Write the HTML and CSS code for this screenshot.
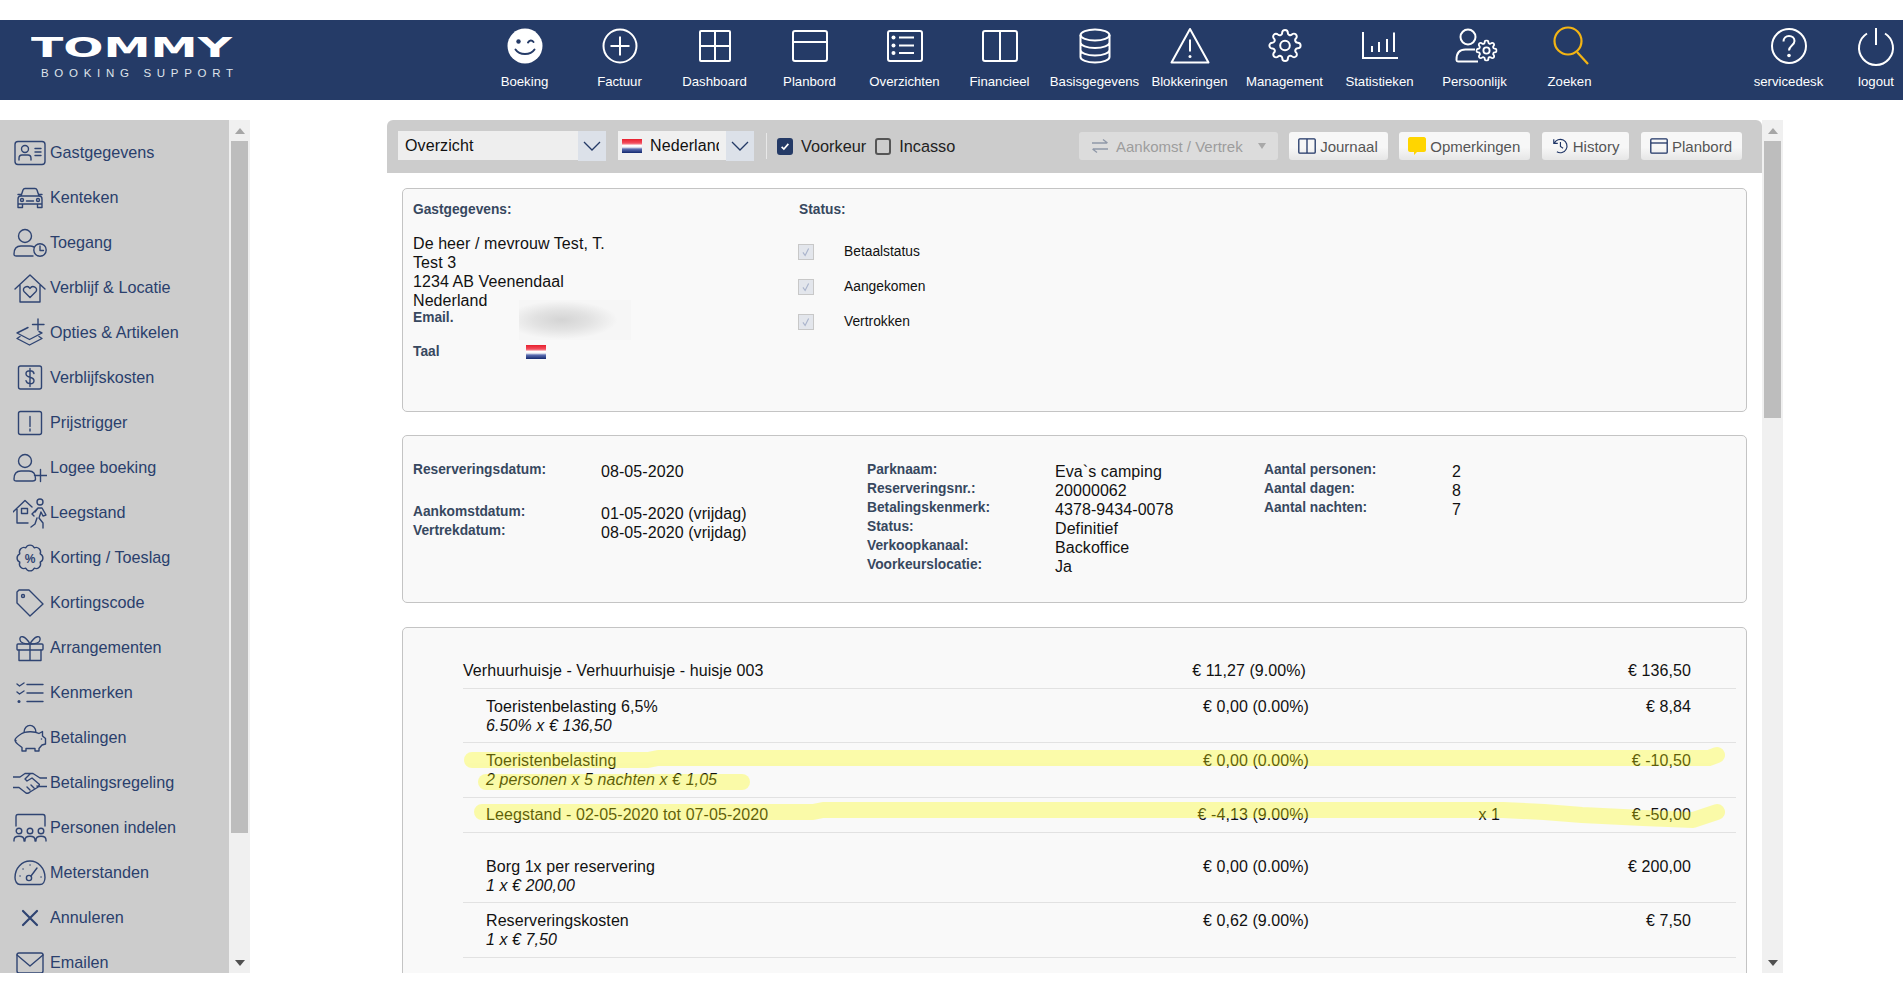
FILE: index.html
```html
<!DOCTYPE html>
<html lang="nl">
<head>
<meta charset="utf-8">
<title>Tommy Booking Support</title>
<link rel="stylesheet" href="styles.css">
</head>
<body>
<svg class="defs" width="0" height="0" aria-hidden="true">
  <symbol id="gear" viewBox="0 0 24 24"><circle cx="12" cy="12" r="3.4"/><path d="M19.4 15a1.65 1.65 0 0 0 .33 1.82l.06.06a2 2 0 0 1 0 2.83 2 2 0 0 1-2.83 0l-.06-.06a1.65 1.65 0 0 0-1.82-.33 1.65 1.65 0 0 0-1 1.51V21a2 2 0 0 1-2 2 2 2 0 0 1-2-2v-.09A1.65 1.65 0 0 0 9 19.4a1.65 1.65 0 0 0-1.82.33l-.06.06a2 2 0 0 1-2.83 0 2 2 0 0 1 0-2.83l.06-.06a1.65 1.65 0 0 0 .33-1.82 1.65 1.65 0 0 0-1.51-1H3a2 2 0 0 1-2-2 2 2 0 0 1 2-2h.09A1.65 1.65 0 0 0 4.6 9a1.65 1.65 0 0 0-.33-1.82l-.06-.06a2 2 0 0 1 0-2.83 2 2 0 0 1 2.83 0l.06.06a1.65 1.65 0 0 0 1.82.33H9a1.65 1.65 0 0 0 1-1.51V3a2 2 0 0 1 2-2 2 2 0 0 1 2 2v.09a1.65 1.65 0 0 0 1 1.51 1.65 1.65 0 0 0 1.82-.33l.06-.06a2 2 0 0 1 2.83 0 2 2 0 0 1 0 2.83l-.06.06a1.65 1.65 0 0 0-.33 1.82V9a1.65 1.65 0 0 0 1.51 1H21a2 2 0 0 1 2 2 2 2 0 0 1-2 2h-.09a1.65 1.65 0 0 0-1.51 1z"/></symbol>
</svg>

<header class="topbar">
  <div class="logo">
    <div class="logo-main">TOMMY</div>
    <div class="logo-sub">BOOKING SUPPORT</div>
  </div>
  <nav class="nav">
    <a class="nav-item"><svg class="nav-ico" viewBox="0 0 40 38"><circle class="solid" cx="20" cy="19" r="17.5"/><circle class="face" cx="13.5" cy="14.5" r="2.2"/><path class="face-line" d="M23 15.5c1.5-2.5 4-2.5 5.5-.5M10.500 22.500c4 6 15 6 19 0"/></svg><span>Boeking</span></a>
    <a class="nav-item"><svg class="nav-ico" viewBox="0 0 40 38"><circle cx="20" cy="19" r="16.5"/><path d="M20 9.500v19M10.500 19h19"/></svg><span>Factuur</span></a>
    <a class="nav-item"><svg class="nav-ico" viewBox="0 0 40 38"><rect x="5" y="4" width="30" height="30" rx="1"/><path d="M20 4v30M5 19h30"/></svg><span>Dashboard</span></a>
    <a class="nav-item"><svg class="nav-ico" viewBox="0 0 40 38"><rect x="3" y="4" width="34" height="30" rx="2"/><path d="M3 15h34"/></svg><span>Planbord</span></a>
    <a class="nav-item"><svg class="nav-ico" viewBox="0 0 40 38"><rect x="3" y="4" width="34" height="30" rx="2"/><path d="M14 10.500h15M14 18.500h15M14 26h15"/><circle class="dot" cx="8.500" cy="10.500" r="2"/><circle class="dot" cx="8.500" cy="18.500" r="2"/><circle class="dot" cx="8.500" cy="26" r="2"/></svg><span>Overzichten</span></a>
    <a class="nav-item"><svg class="nav-ico" viewBox="0 0 40 38"><rect x="3" y="4" width="34" height="30" rx="2"/><path d="M20 4v30"/></svg><span>Financieel</span></a>
    <a class="nav-item"><svg class="nav-ico" viewBox="0 0 40 38"><ellipse cx="20" cy="8" rx="14.500" ry="5.500"/><path d="M5.500 8v22c0 3 6.500 5.500 14.500 5.500s14.500-2.500 14.500-5.500V8M5.500 15.500c0 3 6.500 5.500 14.500 5.500s14.500-2.500 14.500-5.500M5.500 23c0 3 6.500 5.500 14.500 5.500s14.500-2.500 14.500-5.500"/></svg><span>Basisgegevens</span></a>
    <a class="nav-item"><svg class="nav-ico" viewBox="0 0 40 38"><path class="round" d="M20 2L38.500 35.500H1.500Z"/><path d="M20 12.500v12"/><circle class="dot" cx="20" cy="29.500" r="1.500"/></svg><span>Blokkeringen</span></a>
    <a class="nav-item"><svg class="nav-ico" viewBox="0 0 40 38"><use class="gear-big" href="#gear" x="3" y="1.500" width="34" height="34"/></svg><span>Management</span></a>
    <a class="nav-item"><svg class="nav-ico" viewBox="0 0 40 38"><path d="M3 5v26h35M12 19v6M19 15v10M27 12v13M34 5.500v19.500"/></svg><span>Statistieken</span></a>
    <a class="nav-item"><svg class="nav-ico" viewBox="0 0 40 38"><circle cx="13" cy="10" r="7.500"/><path class="round" d="M23 34.500H3.500c-2 0-2-.5-2-2 0-6 3-10 9-10H20"/><use href="#gear" x="20.500" y="12.500" width="22" height="22"/></svg><span>Persoonlijk</span></a>
    <a class="nav-item nav-search"><svg class="nav-ico" viewBox="0 0 40 38"><circle cx="18" cy="14" r="13.500"/><path d="M27 25l11 12"/></svg><span>Zoeken</span></a>
  </nav>
  <div class="nav-right">
    <a class="nav-item nav-service"><svg class="nav-ico" viewBox="0 0 40 38"><circle cx="20" cy="19" r="17"/><path d="M14.500 14.500c0-3.500 2.500-5.500 5.500-5.500s5.500 2 5.500 5c0 4.500-5.500 4.500-5.500 9.500"/><circle class="dot" cx="20" cy="28.500" r="1.800"/></svg><span>servicedesk</span></a>
    <a class="nav-item nav-logout"><svg class="nav-ico" viewBox="0 0 40 38"><path d="M11 6.500a17 17 0 1 0 18 0M20 1v17"/></svg><span>logout</span></a>
  </div>
</header>

<main class="layout">
  <aside class="side">
    <ul class="side-list">
      <li class="side-item"><svg class="side-ico" viewBox="0 0 34 32"><rect x="2" y="4.500" width="30" height="23" rx="3"/><circle cx="12" cy="12" r="3.500"/><path d="M6 23v-1.500c0-2.500 1.500-3.500 3-3.500h6c1.500 0 3 1 3 3.500V23M22 11.500h6M22 15h6M22 18.500h6"/></svg><span>Gastgegevens</span></li>
      <li class="side-item"><svg class="side-ico" viewBox="0 0 34 32"><path d="M8 14l2-6c.4-1 1-1.500 2-1.500h10c1 0 1.600.5 2 1.500l2 6M8 14h18c1.500 0 3 1 3 3v5H5v-5c0-2 1.500-3 3-3zM5 22v3.500h4.500V22M24.500 22v3.500H29V22M5 12.500h3M26 12.500h3M13.500 19h7"/><circle cx="9" cy="18" r="1.500"/><circle cx="25" cy="18" r="1.500"/></svg><span>Kenteken</span></li>
      <li class="side-item"><svg class="side-ico" viewBox="0 0 34 32"><circle cx="12" cy="9" r="6.500"/><path d="M20 29H3.500c-2 0-2.500-.5-2.500-2 0-5 2.500-8 7-8h9c2 0 3 .5 4 1"/><circle cx="27" cy="23" r="6.200"/><path d="M27 19v4.500h3.500"/></svg><span>Toegang</span></li>
      <li class="side-item"><svg class="side-ico" viewBox="0 0 34 32"><path d="M2 17L17 3l15 14M7 13.500V30h20V13.500"/><path d="M17 25.500l-6-6c-2.500-3.500 3.500-7 6-3 2.500-4 8.500-.5 6 3z"/></svg><span>Verblijf &amp; Locatie</span></li>
      <li class="side-item"><svg class="side-ico" viewBox="0 0 34 32"><path d="M25 2v11M19.500 7.500H31M15 10.500L4 16l12.500 6.500L29 16l-3-1.500M7 19.500L4 21.500l12.500 6.500 12.500-6.500-3-2"/></svg><span>Opties &amp; Artikelen</span></li>
      <li class="side-item"><svg class="side-ico" viewBox="0 0 34 32"><rect x="5.500" y="4" width="23" height="23" rx="2"/><path d="M21 11.500c-.5-2-2-2.800-4-2.800s-4 1-4 3 2 3 4 3.500 4 1.500 4 3.500-2 3-4 3-3.500-1-4-3M17 6.500v18"/></svg><span>Verblijfskosten</span></li>
      <li class="side-item"><svg class="side-ico" viewBox="0 0 34 32"><rect x="5.500" y="4.500" width="23" height="23" rx="2"/><path d="M17 9.500v10M17 22v2"/></svg><span>Prijstrigger</span></li>
      <li class="side-item"><svg class="side-ico" viewBox="0 0 34 32"><circle cx="12" cy="9" r="6.500"/><path d="M19.500 29H3.500c-2 0-2.500-.5-2.500-2 0-5 2.500-8 7-8h8c5 0 6.500 3 6.500 8 0 1.500-1 2-3 2zM27.500 17.500v12M21.500 23.500H34"/></svg><span>Logee boeking</span></li>
      <li class="side-item"><svg class="side-ico" viewBox="0 0 34 32"><path d="M0 15L12 3.500 19 10M4 12v14h11"/><rect x="8.500" y="11.500" width="6" height="5"/><circle cx="27" cy="5" r="3"/><path d="M22 15l3-4h4l4 7-3 1-2-4-2 6 4 5v5M24 21l-2 6-4 3M25 11l-6 6 2 2"/></svg><span>Leegstand</span></li>
      <li class="side-item"><svg class="side-ico" viewBox="0 0 34 32"><path d="M27.200 11.800A4.600 4.600 0 0 1 27.200 20.200A4.600 4.600 0 0 1 21.200 26.200A4.600 4.600 0 0 1 12.800 26.200A4.600 4.600 0 0 1 6.800 20.200A4.600 4.600 0 0 1 6.800 11.800A4.600 4.600 0 0 1 12.800 5.800A4.600 4.600 0 0 1 21.200 5.800A4.600 4.600 0 0 1 27.200 11.800Z"/><text class="ico-text" x="17" y="20.500">%</text></svg><span>Korting / Toeslag</span></li>
      <li class="side-item"><svg class="side-ico" viewBox="0 0 34 32"><path d="M6 3h10l14 14-13 12L4 16V5z"/><circle cx="10" cy="9" r="1.500"/></svg><span>Kortingscode</span></li>
      <li class="side-item"><svg class="side-ico" viewBox="0 0 34 32"><rect x="4" y="12" width="26" height="6" rx="1"/><path d="M6 18v10.500h22V18M17 12v16.500M17 12C12 3 6 3 7 8c.5 3 5 4 10 4zM17 12c5-9 11-9 10-4-.5 3-5 4-10 4z"/></svg><span>Arrangementen</span></li>
      <li class="side-item"><svg class="side-ico" viewBox="0 0 34 32"><path d="M4 7l2.500 2L11 6M4 15l2.500 2L11 14M14 7.500h16M14 16h16M14 24.500h16"/><circle class="fill" cx="6" cy="24.500" r="1.500"/></svg><span>Kenmerken</span></li>
      <li class="side-item"><svg class="side-ico" viewBox="0 0 34 32"><path d="M8 12c4-3 14-3 18-.5l3.500-2V14l3 2.500v5.500l-3.500 1-3 3.500V29h-4v-2.500h-9V29H9v-3.500C6 23 2 21 2 18c0-2 3-4 6-6zM11 10.500C11 1 23 1 23 10.500M2 18.500h1"/><circle class="fill" cx="28.500" cy="17" r=".8"/></svg><span>Betalingen</span></li>
      <li class="side-item"><svg class="side-ico" viewBox="0 0 34 32"><path d="M0 10h7l5-3.500h8L27 11h7M0 20.500h6l7 5.500c2 1 3 0 4-1l9-5.500h8M17 7l-5 5 2 2 5-3 7 6c1 1-1 3-2 2M18 18l3 3M14 20l3 3"/></svg><span>Betalingsregeling</span></li>
      <li class="side-item"><svg class="side-ico" viewBox="0 0 34 32"><path d="M3 14V5c0-1.500.5-2.500 2-2.500h25c1.500 0 2 1 2 2.500v9"/><circle cx="6" cy="19" r="2.800"/><circle cx="17" cy="19" r="2.800"/><circle cx="28" cy="19" r="2.800"/><path d="M1 29v-1c0-5 10-5 10 0v1M12 29v-1c0-5 10-5 10 0v1M23 29v-1c0-5 10-5 10 0v1"/></svg><span>Personen indelen</span></li>
      <li class="side-item"><svg class="side-ico" viewBox="0 0 34 32"><path d="M7 27.500c-3 0-5-3-5-7C2 11 9 4 17 4s15 7 15 16.500c0 4-2 7-5 7z"/><circle cx="16" cy="21" r="2.600"/><path d="M18 19l6-8M7 19h.1M10 12h.1M17 8h.1M28 20h.1"/></svg><span>Meterstanden</span></li>
      <li class="side-item"><svg class="side-ico side-ico-x" viewBox="0 0 34 32"><path d="M10 9l14 14M24 9L10 23"/></svg><span>Annuleren</span></li>
      <li class="side-item"><svg class="side-ico" viewBox="0 0 34 32"><rect x="4" y="6" width="26" height="20" rx="2"/><path d="M4 8l13 11L30 8"/></svg><span>Emailen</span></li>
    </ul>
    <div class="scrollbar">
      <div class="sb-up"></div>
      <div class="sb-thumb sb-thumb-side"></div>
      <div class="sb-down"></div>
    </div>
  </aside>

  <section class="content">
    <div class="pane">
      <div class="toolbar">
        <div class="select select-view"><span class="select-text">Overzicht</span><span class="select-arrow"><svg viewBox="0 0 20 12"><path d="M2 2l8 8 8-8"/></svg></span></div>
        <div class="select select-lang"><span class="flag"></span><span class="select-text select-clip">Nederland</span><span class="select-arrow"><svg viewBox="0 0 20 12"><path d="M2 2l8 8 8-8"/></svg></span></div>
        <span class="tool-sep"></span>
        <label class="tool-check"><span class="cb cb-on"><svg viewBox="0 0 16 16"><path d="M3.500 8.500l3 3 6-7"/></svg></span>Voorkeur</label>
        <label class="tool-check"><span class="cb"></span>Incasso</label>
        <div class="tool-btns">
          <a class="btn btn-off"><svg class="btn-ico" viewBox="0 0 18 16"><path d="M1 5h15M12 1.500L16.500 5M17 11H2M6 14.500L1.500 11"/></svg>Aankomst / Vertrek<span class="caret"></span></a>
          <a class="btn"><svg class="btn-ico" viewBox="0 0 18 16"><rect x=".8" y=".8" width="16.400" height="14.400" rx="1"/><path d="M9 1v14"/></svg>Journaal</a>
          <a class="btn"><svg class="btn-ico btn-note" viewBox="0 0 18 18"><path d="M2 0h14c1 0 2 1 2 2v11c0 1-1 2-2 2H9l-3 3v-3H2c-1 0-2-1-2-2V2C0 1 1 0 2 0z"/></svg>Opmerkingen</a>
          <a class="btn"><svg class="btn-ico" viewBox="0 0 18 18"><path d="M2 1.500V6h4.500M2.500 6A7.500 7.500 0 1 1 5.500 15.500M9.500 4.500V9.500l3 2"/></svg>History</a>
          <a class="btn"><svg class="btn-ico" viewBox="0 0 18 16"><rect x=".8" y=".8" width="16.400" height="14.400" rx="1"/><path d="M1 5h16"/></svg>Planbord</a>
        </div>
      </div>

      <div class="panel panel-guest">
        <div class="guest-col">
          <div class="lbl">Gastgegevens:</div>
          <div class="address">De heer / mevrouw Test, T.<br>Test 3<br>1234 AB Veenendaal<br>Nederland</div>
          <div class="guest-row"><div class="lbl lbl-key">Email.</div><div class="blur"></div></div>
          <div class="guest-row guest-lang"><div class="lbl lbl-key">Taal</div><span class="flag"></span></div>
        </div>
        <div class="status-col">
          <div class="lbl">Status:</div>
          <div class="status-list">
            <div class="status-row"><span class="cb-dim"><svg viewBox="0 0 16 16"><path d="M4.500 8.500l2.500 3.500 4-8"/></svg></span>Betaalstatus</div>
            <div class="status-row"><span class="cb-dim"><svg viewBox="0 0 16 16"><path d="M4.500 8.500l2.500 3.500 4-8"/></svg></span>Aangekomen</div>
            <div class="status-row"><span class="cb-dim"><svg viewBox="0 0 16 16"><path d="M4.500 8.500l2.500 3.500 4-8"/></svg></span>Vertrokken</div>
          </div>
        </div>
      </div>

      <div class="panel panel-res">
        <div class="res-group res-dates">
          <div class="lbl">Reserveringsdatum:</div><div class="val">08-05-2020</div>
          <div class="res-gap"></div>
          <div class="lbl">Aankomstdatum:</div><div class="val">01-05-2020 (vrijdag)</div>
          <div class="lbl">Vertrekdatum:</div><div class="val">08-05-2020 (vrijdag)</div>
        </div>
        <div class="res-group res-park">
          <div class="lbl">Parknaam:</div><div class="val">Eva`s camping</div>
          <div class="lbl">Reserveringsnr.:</div><div class="val">20000062</div>
          <div class="lbl">Betalingskenmerk:</div><div class="val">4378-9434-0078</div>
          <div class="lbl">Status:</div><div class="val">Definitief</div>
          <div class="lbl">Verkoopkanaal:</div><div class="val">Backoffice</div>
          <div class="lbl">Voorkeurslocatie:</div><div class="val">Ja</div>
        </div>
        <div class="res-group res-count">
          <div class="lbl">Aantal personen:</div><div class="val">2</div>
          <div class="lbl">Aantal dagen:</div><div class="val">8</div>
          <div class="lbl">Aantal nachten:</div><div class="val">7</div>
        </div>
      </div>

      <div class="panel panel-lines">
        <div class="line line-head"><div class="line-name">Verhuurhuisje - Verhuurhuisje - huisje 003</div><div class="line-vat line-vat-head">€ 11,27 (9.00%)</div><div class="line-qty"></div><div class="line-total">€ 136,50</div></div>
        <div class="line line-a"><div class="line-name">Toeristenbelasting 6,5%<br><em>6.50% x € 136,50</em></div><div class="line-vat">€ 0,00 (0.00%)</div><div class="line-qty"></div><div class="line-total">€ 8,84</div></div>
        <div class="line line-b"><div class="line-name">Toeristenbelasting<br><em>2 personen x 5 nachten x € 1,05</em></div><div class="line-vat">€ 0,00 (0.00%)</div><div class="line-qty"></div><div class="line-total">€ -10,50</div></div>
        <div class="line line-c"><div class="line-name">Leegstand - 02-05-2020 tot 07-05-2020</div><div class="line-vat">€ -4,13 (9.00%)</div><div class="line-qty">x 1</div><div class="line-total">€ -50,00</div></div>
        <div class="line line-d"><div class="line-name">Borg 1x per reservering<br><em>1 x € 200,00</em></div><div class="line-vat">€ 0,00 (0.00%)</div><div class="line-qty"></div><div class="line-total">€ 200,00</div></div>
        <div class="line line-e"><div class="line-name">Reserveringskosten<br><em>1 x € 7,50</em></div><div class="line-vat">€ 0,62 (9.00%)</div><div class="line-qty"></div><div class="line-total">€ 7,50</div></div>
        <svg class="marker" viewBox="0 0 1343 300" aria-hidden="true">
          <g>
            <path d="M69 132H245L255 130H1306L1314 127"/>
            <path d="M83 154H339"/>
            <path d="M79 184H410L420 182H1100L1141 184L1179 187L1240 190L1290 192L1314 184"/>
          </g>
        </svg>
      </div>
    </div>
    <div class="scrollbar">
      <div class="sb-up"></div>
      <div class="sb-thumb sb-thumb-main"></div>
      <div class="sb-down"></div>
    </div>
  </section>
</main>
</body>
</html>
```

FILE: styles.css
```css
* { box-sizing: border-box; }
html, body { margin: 0; padding: 0; height: 100%; overflow: hidden; background: #fff; }
body { padding-top: 20px; font-family: "Liberation Sans", Arial, sans-serif; font-size: 16px; color: #111; }
.defs { position: absolute; }

/* top bar */
.topbar { display: flex; height: 80px; background: #253b67; color: #fff; }
.logo { width: 477px; padding: 15px 0 0 31px; flex: none; }
.logo-main { font-family: "DejaVu Sans", sans-serif; font-weight: 700; font-size: 26px; line-height: 26px; width: 110px; white-space: nowrap; transform: scaleX(1.82); transform-origin: left center; }
.logo-sub { margin: 6px 0 0 10px; font-size: 11.500px; line-height: 12px; letter-spacing: 5.700px; white-space: nowrap; color: #dfe3ea; }
.nav { display: flex; }
.nav-item { display: flex; flex-direction: column; align-items: center; width: 95px; padding-top: 7px; }
.nav-item span { margin-top: 8px; font-size: 13.200px; line-height: 18px; white-space: nowrap; }
.nav-ico { display: block; width: 40px; height: 38px; fill: none; stroke: #fff; stroke-width: 2; overflow: visible; }
.nav-ico .solid { fill: #fff; stroke: none; }
.nav-ico .face { fill: #253b67; stroke: none; }
.nav-ico .face-line { stroke: #253b67; stroke-linecap: round; }
.nav-ico .dot { fill: #fff; stroke: none; }
.nav-ico .round { stroke-linejoin: round; }
.nav-ico .gear-big { stroke-width: 1.400; }
.nav-search .nav-ico { stroke: #f3b414; stroke-width: 2.200; }
.nav-right { display: flex; margin-left: auto; }
.nav-service { width: 87px; margin-right: 17px; }
.nav-logout { width: 54px; }

/* main layout */
.layout { display: flex; height: 853px; margin-top: 20px; }
.side { display: flex; flex: none; width: 250px; height: 100%; overflow: hidden; }
.side-list { flex: none; width: 229px; height: 100%; margin: 0; padding: 10px 0 0; list-style: none; background: #ccc; overflow: hidden; }
.side-item { display: flex; align-items: center; gap: 3px; height: 45px; padding-left: 13px; color: #2a3f6c; font-size: 16.200px; white-space: nowrap; }
.side-ico { flex: none; width: 34px; height: 32px; fill: none; stroke: #2f4472; stroke-width: 1.400; stroke-linejoin: round; stroke-linecap: round; }
.side-ico-x { stroke-width: 2.200; }
.side-ico .fill { fill: #2f4472; stroke: none; }
.ico-text { font-family: "Liberation Sans", sans-serif; font-size: 12px; font-weight: 700; text-anchor: middle; fill: #2f4472; stroke: none; }

.scrollbar { position: relative; display: flex; flex-direction: column; flex: none; width: 21px; height: 100%; background: #f0f0f0; }
.sb-up, .sb-down { flex: none; display: flex; align-items: center; justify-content: center; height: 21px; }
.sb-up::before { content: ""; border: 5px solid transparent; border-top-width: 0; border-bottom: 6px solid #a6a6a6; }
.sb-down { margin-top: auto; }
.sb-down::before { content: ""; border: 5px solid transparent; border-bottom-width: 0; border-top: 6px solid #505050; }
.sb-thumb { flex: none; margin: 0 2px 0 2px; background: #bdbdbd; }
.sb-thumb-side { height: 692px; }
.sb-thumb-main { height: 277px; }

.content { display: flex; flex: none; width: 1396px; height: 100%; margin-left: 137px; overflow: hidden; }
.pane { flex: none; width: 1375px; height: 100%; overflow: hidden; }

/* toolbar */
.toolbar { display: flex; align-items: center; height: 53px; padding: 0 20px 0 11px; background: #ccc; border-radius: 6px 6px 0 0; }
.select { display: flex; align-items: stretch; height: 29px; margin-bottom: 2px; background: #eee; letter-spacing: .1px; }
.select-view { width: 208px; padding-left: 7px; }
.select-lang { width: 136px; margin-left: 12px; padding-left: 4px; background: #f0f0f0; }
.select-text { flex: 1; line-height: 30px; color: #111; overflow: hidden; white-space: nowrap; }
.select-clip { margin: 0 7px 0 8px; }
.select-arrow { flex: none; display: flex; align-items: center; justify-content: center; width: 28px; height: 30px; background: #dce1e9; }
.select-arrow svg { width: 20px; height: 12px; fill: none; stroke: #243a66; stroke-width: 1.300; }
.flag { display: block; flex: none; align-self: center; width: 20px; height: 14px; background: linear-gradient(#e8202e 0, #f25060 30%, #ffffff 46%, #f4f4f8 58%, #5a6cb0 72%, #14296e 100%); }
.tool-sep { width: 1px; height: 26px; margin: 0 0 1px 12px; background: #e8e8e8; }
.tool-check { display: flex; align-items: center; gap: 8px; color: #222; font-size: 16.300px; margin: 0 0 1px 10px; white-space: nowrap; }
.tool-check + .tool-check { margin-left: 9px; }
.cb { display: block; width: 16px; height: 17px; border: 2px solid #555; border-radius: 3px; }
.cb-on { background: #243a66; border-color: #243a66; }
.cb svg { display: block; width: 12px; height: 13px; fill: none; stroke: #fff; stroke-width: 2.200; }
.tool-btns { display: flex; gap: 11.500px; margin: 0 0 1px auto; }
.btn { display: flex; align-items: center; gap: 4px; height: 28px; padding: 0 10px 0 9px; border-radius: 3px; background: linear-gradient(#f7f7f7 55%, #e6e6e6); color: #555; font-size: 15px; white-space: nowrap; }
.btn-off { gap: 7px; padding: 0 12px; background: #dcdcdc; color: #9d9d9d; }
.btn-ico { flex: none; width: 18px; height: 16px; fill: none; stroke: #1f3566; stroke-width: 1.300; }
.btn-off .btn-ico { stroke: #8f98a8; }
.btn-note { height: 18px; fill: #ffd500; stroke: none; }
.caret { margin-left: 8px; border: 4.500px solid transparent; border-bottom-width: 0; border-top: 6px solid #a8a8a8; }

/* panels */
.panel { margin: 0 15px; background: #f9f9f9; border: 1px solid #c4c4c4; border-radius: 5px; }
.lbl { font-size: 13.750px; line-height: 15px; font-weight: 700; color: #37485f; white-space: nowrap; }
.panel-guest { display: flex; height: 224px; margin-top: 15px; padding: 13px 0 0 10px; }
.guest-col { flex: none; width: 386px; }
.address { margin-top: 17px; line-height: 19px; letter-spacing: .08px; }
.guest-row { display: flex; align-items: flex-start; }
.lbl-key { flex: none; width: 106px; }
.blur { width: 112px; height: 40px; margin-top: -10px; background: radial-gradient(ellipse 50% 48% at 38% 50%, #d4d4d4 0, #e2e2e2 50%, #f6f6f6 100%); }
.guest-lang { margin-top: 4px; }
.guest-lang .flag { align-self: flex-start; margin: 1px 0 0 7px; }
.status-col { flex: 1; }
.status-list { margin-top: 17px; }
.status-row { display: flex; align-items: center; height: 35px; font-size: 13.800px; }
.cb-dim { display: block; flex: none; width: 16px; height: 16px; margin: 0 30px 0 -1px; border: 1px solid #c8c8c8; background: #e3e6ec; }
.cb-dim svg { display: block; width: 14px; height: 14px; fill: none; stroke: #aab4cc; stroke-width: 1.300; }
.panel-res { display: flex; height: 168px; margin-top: 23px; padding: 26px 0 0 10px; }
.res-group { display: grid; align-content: start; }
.res-dates { flex: none; width: 454px; grid-template-columns: 188px 1fr; }
.res-park { flex: none; width: 397px; grid-template-columns: 188px 1fr; }
.res-count { flex: none; width: 300px; grid-template-columns: 188px 1fr; }
.res-gap { grid-column: 1 / -1; height: 23px; }
.val { line-height: 19px; white-space: nowrap; letter-spacing: .08px; }
.panel-lines { position: relative; margin-top: 24px; padding: 33px 10px 60px 60px; }
.line { display: grid; grid-template-columns: 676px 170px 191px 1fr; border-bottom: 1px solid #e2e2e2; line-height: 19px; letter-spacing: .08px; }
.line-name { white-space: nowrap; padding-left: 23px; }
.line-head .line-name { padding-left: 0; }
.line em { font-style: italic; }
.line-vat { text-align: right; white-space: nowrap; }
.line-vat-head { padding-right: 3px; }
.line-qty { text-align: right; white-space: nowrap; }
.line-total { text-align: right; padding-right: 45px; white-space: nowrap; }
.line-head { padding: 0 0 8px; }
.line-a { padding: 8px 0 7px; }
.line-b { padding: 8px 0 8px; }
.line-c { padding: 7px 0 8px; }
.line-d { padding: 24px 0 7px; }
.line-e { padding: 8px 0 8px; }
.marker { position: absolute; left: 0; top: 0; width: 1343px; height: 300px; fill: none; pointer-events: none; }
.marker g { stroke: #ffff00; stroke-width: 16; stroke-linecap: round; stroke-linejoin: round; opacity: .32; }
```
